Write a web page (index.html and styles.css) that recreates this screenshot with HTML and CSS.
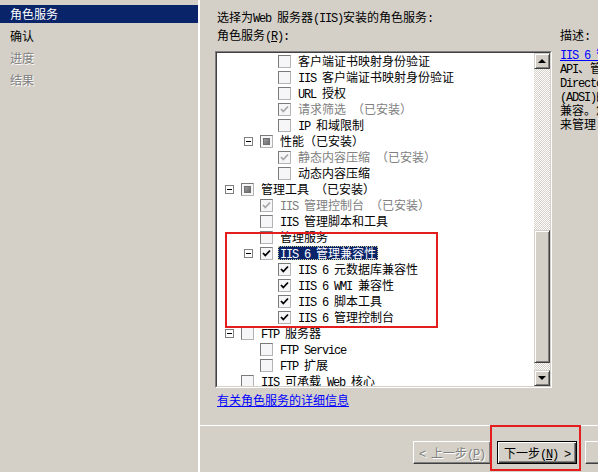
FILE: index.html
```html
<!DOCTYPE html>
<html lang="zh-CN">
<head>
    <meta charset="UTF-8">
    <title>添加角色服务</title>
    <link rel="stylesheet" href="styles.css">
</head>
<body>
    <div class="wizard">
        <ul class="steps">
            <li class="active">角色服务</li>
            <li>确认</li>
            <li class="off">进度</li>
            <li class="off">结果</li>
        </ul>

        <div class="main">
            <div class="content">
                <p class="title">选择为<span class="en">Web </span>服务器<span class="en">(IIS)</span>安装的角色服务<span class="en">:</span></p>
                <div class="cols">
                    <div class="pick">
                        <p class="label">角色服务<span class="en">(<u>R</u>):</span></p>
                        <div class="listbox">
                            <div class="listbox-in">
                                <div class="tree">
                                    <div class="row l3"><i class="tog none"></i><i class="cb"></i><span class="txt">客户端证书映射身份验证</span></div>
                                    <div class="row l3"><i class="tog none"></i><i class="cb"></i><span class="txt"><span class="en">IIS </span>客户端证书映射身份验证</span></div>
                                    <div class="row l3"><i class="tog none"></i><i class="cb"></i><span class="txt"><span class="en">URL </span>授权</span></div>
                                    <div class="row l3 gray"><i class="tog none"></i><i class="cb dis"><svg viewBox="0 0 11 11"><path d="M2 5l2.3 2.5L9 2.5"/></svg></i><span class="txt">请求筛选<span class="en"> </span>（已安装）</span></div>
                                    <div class="row l3"><i class="tog none"></i><i class="cb"></i><span class="txt"><span class="en">IP </span>和域限制</span></div>
                                    <div class="row l2"><i class="tog"></i><i class="cb part"></i><span class="txt">性能（已安装）</span></div>
                                    <div class="row l3 gray"><i class="tog none"></i><i class="cb dis"><svg viewBox="0 0 11 11"><path d="M2 5l2.3 2.5L9 2.5"/></svg></i><span class="txt">静态内容压缩<span class="en"> </span>（已安装）</span></div>
                                    <div class="row l3"><i class="tog none"></i><i class="cb"></i><span class="txt">动态内容压缩</span></div>
                                    <div class="row l1"><i class="tog"></i><i class="cb part"></i><span class="txt">管理工具<span class="en"> </span>（已安装）</span></div>
                                    <div class="row l2 gray"><i class="tog none"></i><i class="cb dis"><svg viewBox="0 0 11 11"><path d="M2 5l2.3 2.5L9 2.5"/></svg></i><span class="txt"><span class="en">IIS </span>管理控制台<span class="en"> </span>（已安装）</span></div>
                                    <div class="row l2"><i class="tog none"></i><i class="cb"></i><span class="txt"><span class="en">IIS </span>管理脚本和工具</span></div>
                                    <div class="row l2"><i class="tog none"></i><i class="cb"></i><span class="txt">管理服务</span></div>
                                    <div class="row l2"><i class="tog"></i><i class="cb"><svg viewBox="0 0 11 11"><path d="M2 5l2.3 2.5L9 2.5"/></svg></i><span class="txt sel"><span class="en">IIS 6 </span>管理兼容性</span></div>
                                    <div class="row l3"><i class="tog none"></i><i class="cb"><svg viewBox="0 0 11 11"><path d="M2 5l2.3 2.5L9 2.5"/></svg></i><span class="txt"><span class="en">IIS 6 </span>元数据库兼容性</span></div>
                                    <div class="row l3"><i class="tog none"></i><i class="cb"><svg viewBox="0 0 11 11"><path d="M2 5l2.3 2.5L9 2.5"/></svg></i><span class="txt"><span class="en">IIS 6 WMI </span>兼容性</span></div>
                                    <div class="row l3"><i class="tog none"></i><i class="cb"><svg viewBox="0 0 11 11"><path d="M2 5l2.3 2.5L9 2.5"/></svg></i><span class="txt"><span class="en">IIS 6 </span>脚本工具</span></div>
                                    <div class="row l3"><i class="tog none"></i><i class="cb"><svg viewBox="0 0 11 11"><path d="M2 5l2.3 2.5L9 2.5"/></svg></i><span class="txt"><span class="en">IIS 6 </span>管理控制台</span></div>
                                    <div class="row l1"><i class="tog"></i><i class="cb"></i><span class="txt"><span class="en">FTP </span>服务器</span></div>
                                    <div class="row l2"><i class="tog none"></i><i class="cb"></i><span class="txt"><span class="en">FTP Service</span></span></div>
                                    <div class="row l2"><i class="tog none"></i><i class="cb"></i><span class="txt"><span class="en">FTP </span>扩展</span></div>
                                    <div class="row l1"><i class="tog none"></i><i class="cb"></i><span class="txt"><span class="en">IIS </span>可承载<span class="en"> Web </span>核心</span></div>
                                </div>
                                <div class="scrollbar">
                                    <div class="sb-btn up"></div>
                                    <div class="track"><div class="thumb"></div></div>
                                    <div class="sb-btn down"></div>
                                </div>
                            </div>
                        </div>
                        <a class="more" href="#">有关角色服务的详细信息</a>
                    </div>

                    <div class="desc">
                        <p class="desc-head">描述<span class="en">:</span></p>
                        <a class="desc-link" href="#"><span class="en">IIS 6 </span>管理兼容性</a>
                        <p class="desc-line"><span class="en">API</span>、管理脚本</p>
                        <p class="desc-line"><span class="en">Directory Service</span></p>
                        <p class="desc-line"><span class="en">(ADSI)</span>的接口</p>
                        <p class="desc-line">兼容。您可以</p>
                        <p class="desc-line">来管理</p>
                    </div>
                </div>
            </div>

            <div class="footer">
                <button class="btn prev" disabled><span class="en">&lt; </span>上一步<span class="en">(<u>P</u>)</span></button>
                <button class="btn next">下一步<span class="en">(<u>N</u>) &gt;</span></button>
                <button class="btn cancel">取消</button>
            </div>
        </div>
    </div>

    <!-- 标注框 -->
    <div class="mark mark-tree"></div>
    <div class="mark mark-next"></div>
</body>
</html>
```

FILE: styles.css
```css
body {
    margin: 0;
    width: 598px;
    height: 472px;
    overflow: hidden;
    position: relative;
    background: #d4d0c8;
    font-family: "Noto Sans CJK SC", sans-serif;
    font-size: 12px;
    color: #000;
}
p {
    margin: 0;
}
.en {
    font-family: "Liberation Mono", monospace;
    font-size: 12px;
    letter-spacing: -1.2px;
    line-height: 1;
}
.wizard {
    display: flex;
    height: 472px;
}

/* 左侧步骤 */
.steps {
    list-style: none;
    margin: 0;
    padding: 5px 0 0;
    width: 198px;
    flex-shrink: 0;
    border-right: 2px solid #fff;
}
.steps li {
    height: 18px;
    line-height: 18px;
    padding-left: 10px;
    margin-bottom: 4px;
}
.steps li.active {
    background: #0a246a;
    color: #fff;
}
.steps li.off {
    color: #808080;
    text-shadow: 1px 1px #fff;
}

/* 右侧内容 */
.main {
    flex: 1;
    display: flex;
    flex-direction: column;
    min-width: 0;
}
.content {
    height: 425px;
    box-sizing: border-box;
    padding: 9px 0 0 15px;
}
.title {
    height: 16px;
    line-height: 16px;
    padding-left: 2px;
    white-space: nowrap;
}
.cols {
    display: flex;
}
.pick {
    width: 337px;
    flex-shrink: 0;
}
.label {
    margin-top: 2px;
    height: 16px;
    line-height: 16px;
    padding-left: 2px;
}
.listbox {
    margin-top: 8px;
    width: 337px;
    height: 337px;
    box-sizing: border-box;
    border: 1px solid;
    border-color: #808080 #fff #fff #808080;
}
.listbox-in {
    height: 100%;
    box-sizing: border-box;
    border: 1px solid;
    border-color: #404040 #d4d0c8 #d4d0c8 #404040;
    background: #fff;
    display: flex;
}
.tree {
    flex: 1;
    overflow: hidden;
}
.row {
    display: flex;
    align-items: center;
    height: 16px;
    white-space: nowrap;
}
.l1 { padding-left: 8px; }
.l2 { padding-left: 27px; }
.l3 { padding-left: 45px; }
.row.gray {
    color: #808080;
}
.tog {
    width: 9px;
    height: 9px;
    box-sizing: border-box;
    border: 1px solid #808080;
    background: #fff;
    margin-right: 7px;
    position: relative;
    flex-shrink: 0;
}
.tog::after {
    content: "";
    position: absolute;
    left: 1px;
    top: 3px;
    width: 5px;
    height: 1px;
    background: #000;
}
.tog.none {
    visibility: hidden;
}
.cb {
    width: 13px;
    height: 13px;
    box-sizing: border-box;
    border: 1px solid;
    border-color: #7a7a7a #b4b4b4 #b4b4b4 #7a7a7a;
    background: #f6f5f8;
    display: flex;
    align-items: center;
    justify-content: center;
    flex-shrink: 0;
    color: #000;
}
.cb svg {
    width: 11px;
    height: 11px;
    fill: none;
    stroke: currentColor;
    stroke-width: 1.8;
}
.cb.dis {
    color: #a8a8a8;
}
.cb.part::after {
    content: "";
    width: 7px;
    height: 7px;
    box-sizing: border-box;
    border: 1px solid #6e6e6e;
    background: linear-gradient(135deg, #9c9c9c, #6a6a6a);
}
.txt {
    margin-left: 6px;
    padding: 0 1px;
    height: 14px;
    line-height: 14px;
}
.txt.sel {
    margin-left: 5px;
    padding: 0 2px;
    background: #0a246a;
    color: #fff;
    outline: 1px dotted #c8c890;
    outline-offset: -1px;
}

/* 滚动条 */
.scrollbar {
    width: 16px;
    display: flex;
    flex-direction: column;
    flex-shrink: 0;
}
.sb-btn, .thumb {
    background: #d4d0c8;
    box-sizing: border-box;
    border: 1px solid;
    border-color: #d4d0c8 #404040 #404040 #d4d0c8;
    box-shadow: inset 1px 1px #fff, inset -1px -1px #808080;
}
.sb-btn {
    height: 16px;
    display: flex;
    align-items: center;
    justify-content: center;
}
.sb-btn::after {
    content: "";
    width: 0;
    height: 0;
    border-left: 4px solid transparent;
    border-right: 4px solid transparent;
}
.sb-btn.up::after {
    border-bottom: 4px solid #000;
}
.sb-btn.down::after {
    border-top: 4px solid #000;
}
.track {
    flex: 1;
    background-image: repeating-conic-gradient(#fff 0 25%, #d4d0c8 0 50%);
    background-size: 2px 2px;
}
.thumb {
    margin-top: 161px;
    height: 133px;
}
.more {
    display: block;
    margin-top: 4px;
    padding-left: 2px;
    height: 16px;
    line-height: 16px;
    color: #0000ff;
}

/* 描述 */
.desc {
    margin-left: 8px;
    padding-top: 2px;
    white-space: nowrap;
    overflow: hidden;
}
.desc-head {
    height: 16px;
    line-height: 16px;
}
.desc-link {
    display: block;
    margin-top: 4px;
    height: 14px;
    line-height: 14px;
    color: #0000ff;
}
.desc-line {
    height: 14px;
    line-height: 14px;
}

/* 底部按钮 */
.footer {
    flex: 1;
    border-top: 1px solid #fff;
    padding: 15px 0 0 213px;
    display: flex;
    align-items: flex-start;
    overflow: hidden;
}
.btn {
    flex-shrink: 0;
    width: 78px;
    height: 23px;
    padding: 0;
    background: #d4d0c8;
    font-family: "Noto Sans CJK SC", sans-serif;
    font-size: 12px;
    color: #000;
    border: 1px solid;
    border-color: #fff #404040 #404040 #fff;
    box-shadow: inset -1px -1px #808080;
}
.btn.prev {
    color: #808080;
    text-shadow: 1px 1px #fff;
}
.btn.next {
    width: 80px;
    margin-left: 6px;
    border-color: #000;
    box-shadow: inset 1px 1px #fff, inset -1px -1px #404040, inset -2px -2px #808080;
}
.btn.cancel {
    margin-left: 8px;
}

/* 红色标注 */
.mark {
    position: absolute;
    box-sizing: border-box;
    border: 2px solid #e41e1e;
}
.mark-tree {
    left: 225px;
    top: 232px;
    width: 213px;
    height: 96px;
}
.mark-next {
    left: 490px;
    top: 425px;
    width: 91px;
    height: 46px;
}
```
